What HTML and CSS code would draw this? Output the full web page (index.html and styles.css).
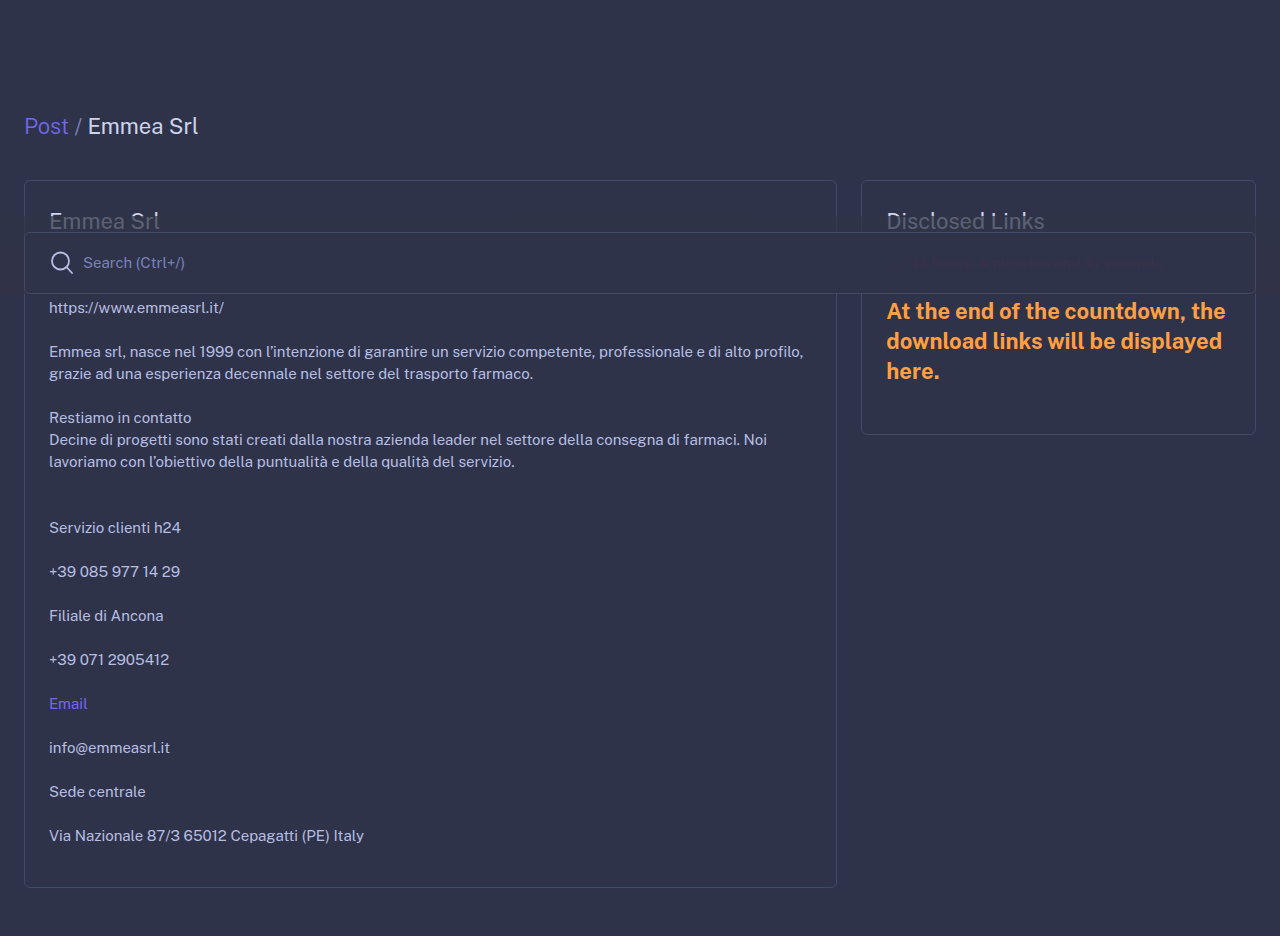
FILE: index.html
```html
<!DOCTYPE html>
<html lang="it">
<head>
<meta charset="utf-8">
<title>Emmea Srl</title>
<link rel="stylesheet" href="styles.css">
</head>
<body>
<main class="page">
  <h4 class="crumbs"><a href="#">Post</a> <span class="slash">/</span> Emmea Srl</h4>
  <div class="columns">
    <article class="card post">
      <h5 class="card-title">Emmea Srl</h5>
      <div class="card-body">
        <p>https://www.emmeasrl.it/</p>
        <p>Emmea srl, nasce nel 1999 con l’intenzione di garantire un servizio competente, professionale e di alto profilo, grazie ad una esperienza decennale nel settore del trasporto farmaco.</p>
        <p>Restiamo in contatto<br>Decine di progetti sono stati creati dalla nostra azienda leader nel settore della consegna di farmaci. Noi lavoriamo con l’obiettivo della puntualità e della qualità del servizio.</p>
        <p class="section">Servizio clienti h24</p>
        <p>+39 085 977 14 29</p>
        <p>Filiale di Ancona</p>
        <p>+39 071 2905412</p>
        <p><a href="#">Email</a></p>
        <p>info@emmeasrl.it</p>
        <p>Sede centrale</p>
        <p>Via Nazionale 87/3 65012 Cepagatti (PE) Italy</p>
      </div>
    </article>
    <aside class="card links">
      <h5 class="card-title">Disclosed Links</h5>
      <p class="notice">At the end of the countdown, the download links will be displayed here.</p>
    </aside>
  </div>
</main>
<div class="overlay">
  <form class="search" role="search">
    <svg class="icon" viewBox="0 0 24 24" aria-hidden="true"><circle cx="11.500" cy="10" r="8.500"/><path d="M17.500 16l5.500 6"/></svg>
    <input class="search-input" type="search" placeholder="Search (Ctrl+/)" aria-label="Search">
    <p class="timer">
      <svg class="clock" viewBox="0 0 18 18" aria-hidden="true"><circle cx="9" cy="8" r="8"/><path d="M8 4v4l3 3"/></svg>
      14 hours, 4 minutes and 41 seconds
    </p>
  </form>
</div>
</body>
</html>
```
FILE: styles.css
```css
* { box-sizing: border-box; }
body {
  margin: 0;
  background: #2f3349;
  color: #b6bee3;
  font: 400 15px/22px "Public Sans", Inter, sans-serif;
}
a { color: #7367f0; text-decoration: none; }
p, h4, h5 { margin: 0; }
.page { padding: 108px 24px 48px; }
.crumbs { color: #cfd3ec; font-size: 22px; line-height: 36px; font-weight: 400; margin-bottom: 36px; }
.crumbs a, .slash { font-weight: 300; }
.slash { color: #7983bb; }
.columns { display: grid; grid-template-columns: repeat(12, 1fr); gap: 24px; align-items: start; }
.post { grid-column: span 8; }
.links { grid-column: span 4; }
.card { border: 1px solid #434968; border-radius: 6px; padding: 24px; }
.card-title { color: #cfd3ec; font-size: 22px; line-height: 32px; font-weight: 400; }
.card-body { display: flex; flex-direction: column; gap: 22px; padding: 60px 0 16px; }
.section { margin-top: 22px; }
.notice { color: #ff9f43; font-size: 22px; line-height: 30px; font-weight: 700; padding: 59px 0 24px; }
.overlay {
  position: absolute; top: 216px; left: 0; right: 0;
  padding: 16px 24px 0;
  background: linear-gradient(rgba(47, 52, 70, 0.72), rgba(50, 50, 72, 0.72));
}
.search {
  display: flex; align-items: center; position: relative;
  height: 62px; padding: 0 24px;
  background: #2f3349; border: 1px solid #434968; border-radius: 6px;
}
.icon { width: 24px; height: 24px; flex: none; fill: none; stroke: #b6bee3; stroke-width: 1.8; stroke-linecap: round; }
.search-input { flex: 1; min-width: 0; border: 0; outline: 0; padding: 0 10px; background: none; color: #b6bee3; font: inherit; }
.search-input::placeholder { color: #7983bb; opacity: 1; }
.timer { position: absolute; right: 93px; display: flex; align-items: center; gap: 5px; color: #373149; font-weight: 700; }
.clock { width: 18px; height: 18px; fill: none; stroke: #373149; stroke-width: 1; }
```
